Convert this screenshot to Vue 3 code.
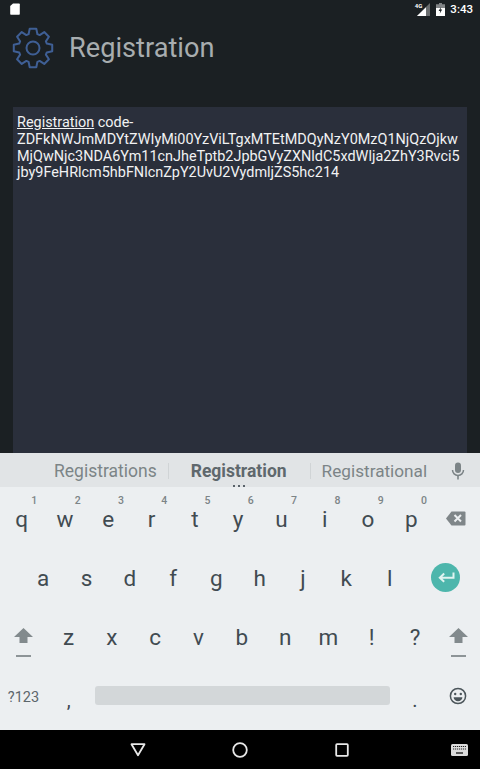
<template>
  <div class="screen">
    <div class="top">
      <div class="status">
        <svg class="sd" width="10" height="12" viewBox="0 0 10 12">
          <path d="M3 0.5h6a0.8 0.8 0 0 1 .8 .8v9.7a0.8 0.8 0 0 1 -.8 .8h-8a0.8 0.8 0 0 1 -.8 -.8v-8z" fill="#fff" />
        </svg>
        <div class="status-right">
          <span class="net">4G</span>
          <svg width="13" height="13" viewBox="0 0 13 13">
            <path d="M13 0v13h-13z" fill="#fff" opacity=".35" />
            <path d="M9 4.2v8.8h-9z" fill="#fff" />
          </svg>
          <svg class="battery" width="9" height="13" viewBox="0 0 9 13">
            <path d="M3 0h3v1.2h3v11.8h-9v-11.8h3z" fill="#fff" opacity=".45" />
            <path d="M0 5h9v8h-9z" fill="#fff" />
            <path d="M5 4l-2.4 4h1.6l-.4 2.6 2.4-4h-1.6z" fill="#1b2023" />
          </svg>
          <span class="time">3:43</span>
        </div>
      </div>
      <header class="title-bar">
        <svg class="gear" width="42" height="42" viewBox="0 0 42 42">
          <path :d="gearPath" fill="none" stroke="#3f5f95" stroke-width="2" stroke-linejoin="round" />
          <circle cx="21" cy="21" r="6.5" fill="none" stroke="#3f5f95" stroke-width="2" />
        </svg>
        <h1>Registration</h1>
      </header>
    </div>

    <main class="content">
      <div class="panel"><u>Registration</u> code-ZDFkNWJmMDYtZWIyMi00YzViLTgxMTEtMDQyNzY0MzQ1NjQzOjkwMjQwNjc3NDA6Ym11cnJheTptb2JpbGVyZXNldC5xdWlja2ZhY3Rvci5jby9FeHRlcm5hbFNlcnZpY2UvU2VydmljZS5hc214</div>
    </main>

    <section class="keyboard">
      <div class="suggestions">
        <span class="sug">Registrations</span>
        <span class="sug strong">Registration<i class="dots"></i></span>
        <span class="sug">Registrational</span>
        <svg class="mic" width="14" height="18" viewBox="0 0 14 18">
          <rect x="4" y="0.5" width="6" height="10.5" rx="3" fill="#7c8487" />
          <path d="M1.5 8a5.5 5.5 0 0 0 11 0" fill="none" stroke="#7c8487" stroke-width="1.5" />
          <path d="M7 13.5v4" stroke="#7c8487" stroke-width="1.6" />
        </svg>
      </div>

      <div class="row">
        <span v-for="k in row1" :key="k.l" class="key hinted"><small>{{ k.n }}</small>{{ k.l }}</span>
        <span class="key wide">
          <svg width="20" height="15" viewBox="0 0 20 15">
            <path d="M5.5 0.5h13a1 1 0 0 1 1 1v12a1 1 0 0 1 -1 1h-13l-5.5 -7z" fill="#7f8689" />
            <path d="M8.5 4l6.5 6.5m0 -6.5l-6.5 6.5" stroke="#eceff1" stroke-width="2" />
          </svg>
        </span>
      </div>

      <div class="row row-home">
        <span v-for="k in row2" :key="k" class="key">{{ k }}</span>
        <span class="key enter-cell">
          <span class="enter">
            <svg width="18" height="12" viewBox="0 0 18 12">
              <path d="M16.5 0.5v5.2h-13M7.2 1.6l-4.4 4.1 4.4 4.1" fill="none" stroke="#dff3f0" stroke-width="2" />
            </svg>
          </span>
        </span>
      </div>

      <div class="row">
        <span class="key wide shift">
          <svg width="19" height="16" viewBox="0 0 19 16">
            <path d="M9.5 0l9.5 9h-5.5v6h-8v-6h-5.5z" fill="#828a8d" />
          </svg>
          <i class="dash"></i>
        </span>
        <span v-for="k in row3" :key="k" class="key">{{ k }}</span>
        <span class="key last shift">
          <svg width="19" height="16" viewBox="0 0 19 16">
            <path d="M9.5 0l9.5 9h-5.5v6h-8v-6h-5.5z" fill="#828a8d" />
          </svg>
          <i class="dash"></i>
        </span>
      </div>

      <div class="row">
        <span class="key wide symbols">?123</span>
        <span class="key comma">,</span>
        <span class="space-cell"><span class="space"></span></span>
        <span class="key period">.</span>
        <span class="key last">
          <svg width="18" height="18" viewBox="0 0 18 18">
            <circle cx="9" cy="9" r="7.6" fill="none" stroke="#4c565b" stroke-width="1.5" />
            <circle cx="6.2" cy="7" r="1.2" fill="#4c565b" />
            <circle cx="11.8" cy="7" r="1.2" fill="#4c565b" />
            <path d="M4.6 10.2h8.8a4.4 4 0 0 1 -8.8 0z" fill="#4c565b" />
          </svg>
        </span>
      </div>
    </section>

    <nav class="nav">
      <svg width="16" height="14" viewBox="0 0 16 14">
        <path d="M1.5 1.2h13l-6.5 11z" fill="none" stroke="#e8e8e8" stroke-width="1.8" stroke-linejoin="round" />
      </svg>
      <svg width="16" height="16" viewBox="0 0 16 16">
        <circle cx="8" cy="8" r="6.8" fill="none" stroke="#e8e8e8" stroke-width="1.8" />
      </svg>
      <svg width="14" height="14" viewBox="0 0 14 14">
        <rect x="1.2" y="1.2" width="11.6" height="11.6" rx="0.8" fill="none" stroke="#e8e8e8" stroke-width="1.8" />
      </svg>
      <svg class="kb" width="17" height="12" viewBox="0 0 17 12">
        <rect width="17" height="12" rx="1.5" fill="#dcdcdc" />
        <path d="M2 2.5h13M2 5h13" stroke="#222" stroke-width="1.2" stroke-dasharray="1.2 .8" />
        <path d="M5 9h7" stroke="#222" stroke-width="1.4" />
      </svg>
    </nav>
  </div>
</template>

<script setup>
const row1 = [
  { l: 'q', n: 1 }, { l: 'w', n: 2 }, { l: 'e', n: 3 }, { l: 'r', n: 4 }, { l: 't', n: 5 },
  { l: 'y', n: 6 }, { l: 'u', n: 7 }, { l: 'i', n: 8 }, { l: 'o', n: 9 }, { l: 'p', n: 0 }
]
const row2 = ['a', 's', 'd', 'f', 'g', 'h', 'j', 'k', 'l']
const row3 = ['z', 'x', 'c', 'v', 'b', 'n', 'm', '!', '?']

// eight-tooth gear outline
const buildGear = () => {
  const cx = 21
  const cy = 21
  const outer = 19.5
  const inner = 14.5
  const pts = []
  for (let i = 0; i < 8; i++) {
    const a = (i * Math.PI) / 4
    const offs = [[-0.31, inner], [-0.17, outer], [0.17, outer], [0.31, inner]]
    offs.forEach(([d, r]) => {
      pts.push(`${(cx + r * Math.sin(a + d)).toFixed(2)} ${(cy - r * Math.cos(a + d)).toFixed(2)}`)
    })
  }
  return 'M' + pts.join('L') + 'Z'
}
const gearPath = buildGear()
</script>

<style>
html, body {
  margin: 0;
  background: #1b2023;
}
</style>

<style scoped>
.screen {
  width: 480px;
  height: 769px;
  display: flex;
  flex-direction: column;
  overflow: hidden;
  font-family: Roboto, "Liberation Sans", sans-serif;
  background: #1b2023;
}

.top {
  height: 107px;
  flex: none;
}

.status {
  height: 20px;
  display: flex;
  align-items: center;
  justify-content: space-between;
  padding: 0 7px 2px 10px;
  box-sizing: border-box;
  color: #fff;
}

.status-right {
  display: flex;
  align-items: center;
}

.net {
  font-size: 6px;
  font-weight: 700;
  margin-right: -5px;
  align-self: flex-start;
}

.battery {
  margin: 0 5px 0 6px;
}

.time {
  font-size: 11.5px;
  font-weight: 500;
}

.title-bar {
  display: flex;
  align-items: center;
  gap: 15px;
  padding: 7px 0 0 12px;
}

.title-bar h1 {
  margin: 0;
  font-size: 27.2px;
  font-weight: 400;
  color: #a8adaf;
}

.content {
  flex: 1;
  min-height: 0;
  padding: 0 13px;
  display: flex;
}

.panel {
  flex: 1;
  background: #2a2f3b;
  color: #f1f2f3;
  padding: 8px 6px 0 4px;
  font-size: 14.43px;
  line-height: 16.8px;
  overflow-wrap: anywhere;
}

.keyboard {
  flex: none;
  height: 277px;
  background: #eceff1;
  box-sizing: border-box;
}

.suggestions {
  height: 34px;
  padding-top: 2px;
  box-sizing: border-box;
  background: #e1e4e6;
  display: flex;
  align-items: center;
  color: #7c8487;
  font-size: 17.5px;
  position: relative;
}

.sug {
  position: relative;
  white-space: nowrap;
}

.sug:nth-child(1) {
  margin-left: 54px;
}

.sug:nth-child(2) {
  margin-left: 34px;
  color: #5f686d;
  font-weight: 700;
}

.sug:nth-child(3) {
  margin-left: 35px;
  font-size: 17.2px;
}

.sug:nth-child(2)::before,
.sug:nth-child(3)::before {
  content: "";
  position: absolute;
  left: -23px;
  top: 2px;
  bottom: 2px;
  width: 1px;
  background: #d0d4d6;
}

.sug:nth-child(3)::before {
  left: -12px;
}

.dots {
  position: absolute;
  left: 42px;
  bottom: -6px;
  width: 14px;
  height: 2px;
  background: repeating-linear-gradient(90deg, #59626a 0 2px, transparent 2px 5px);
}

.mic {
  margin-left: auto;
  margin-right: 15px;
}

.row {
  display: flex;
  height: 59px;
}

.row:nth-of-type(2) {
  margin-top: 2px;
}

.row-home {
  padding-left: 21.6px;
}

.key {
  flex: none;
  width: 43.3px;
  position: relative;
  display: flex;
  align-items: center;
  justify-content: center;
  font-size: 22.5px;
  color: #414b51;
}

.hinted small {
  position: absolute;
  top: 5px;
  right: 6px;
  font-size: 10.5px;
  font-weight: 500;
  color: #7c8487;
}

.wide {
  width: 47px;
}

.last {
  flex: 1;
  width: auto;
}

.enter-cell {
  flex: 1;
  width: auto;
}

.enter {
  width: 29px;
  height: 29px;
  border-radius: 50%;
  background: #4db6ac;
  display: flex;
  align-items: center;
  justify-content: center;
}

.shift {
  flex-direction: column;
  padding-top: 12px;
  box-sizing: border-box;
}

.dash {
  width: 15px;
  height: 1.5px;
  background: #8d9497;
  margin-top: 11px;
}

.symbols {
  font-size: 14.5px;
  color: #5c666b;
  padding-top: 3px;
  box-sizing: border-box;
}

.comma,
.period {
  padding-top: 8px;
  box-sizing: border-box;
  font-size: 20px;
}

.space-cell {
  flex: none;
  width: 295px;
  margin-left: 5px;
  margin-right: 3px;
  display: flex;
  align-items: center;
}

.space {
  width: 100%;
  height: 19px;
  border-radius: 3px;
  background: #d3d7d9;
}

.nav {
  flex: none;
  height: 39px;
  background: #000;
  display: flex;
  align-items: center;
  padding-left: 130px;
  position: relative;
}

.nav svg:nth-child(2) {
  margin-left: 86px;
}

.nav svg:nth-child(3) {
  margin-left: 87px;
}

.kb {
  position: absolute;
  right: 12px;
  top: 14px;
}
</style>
